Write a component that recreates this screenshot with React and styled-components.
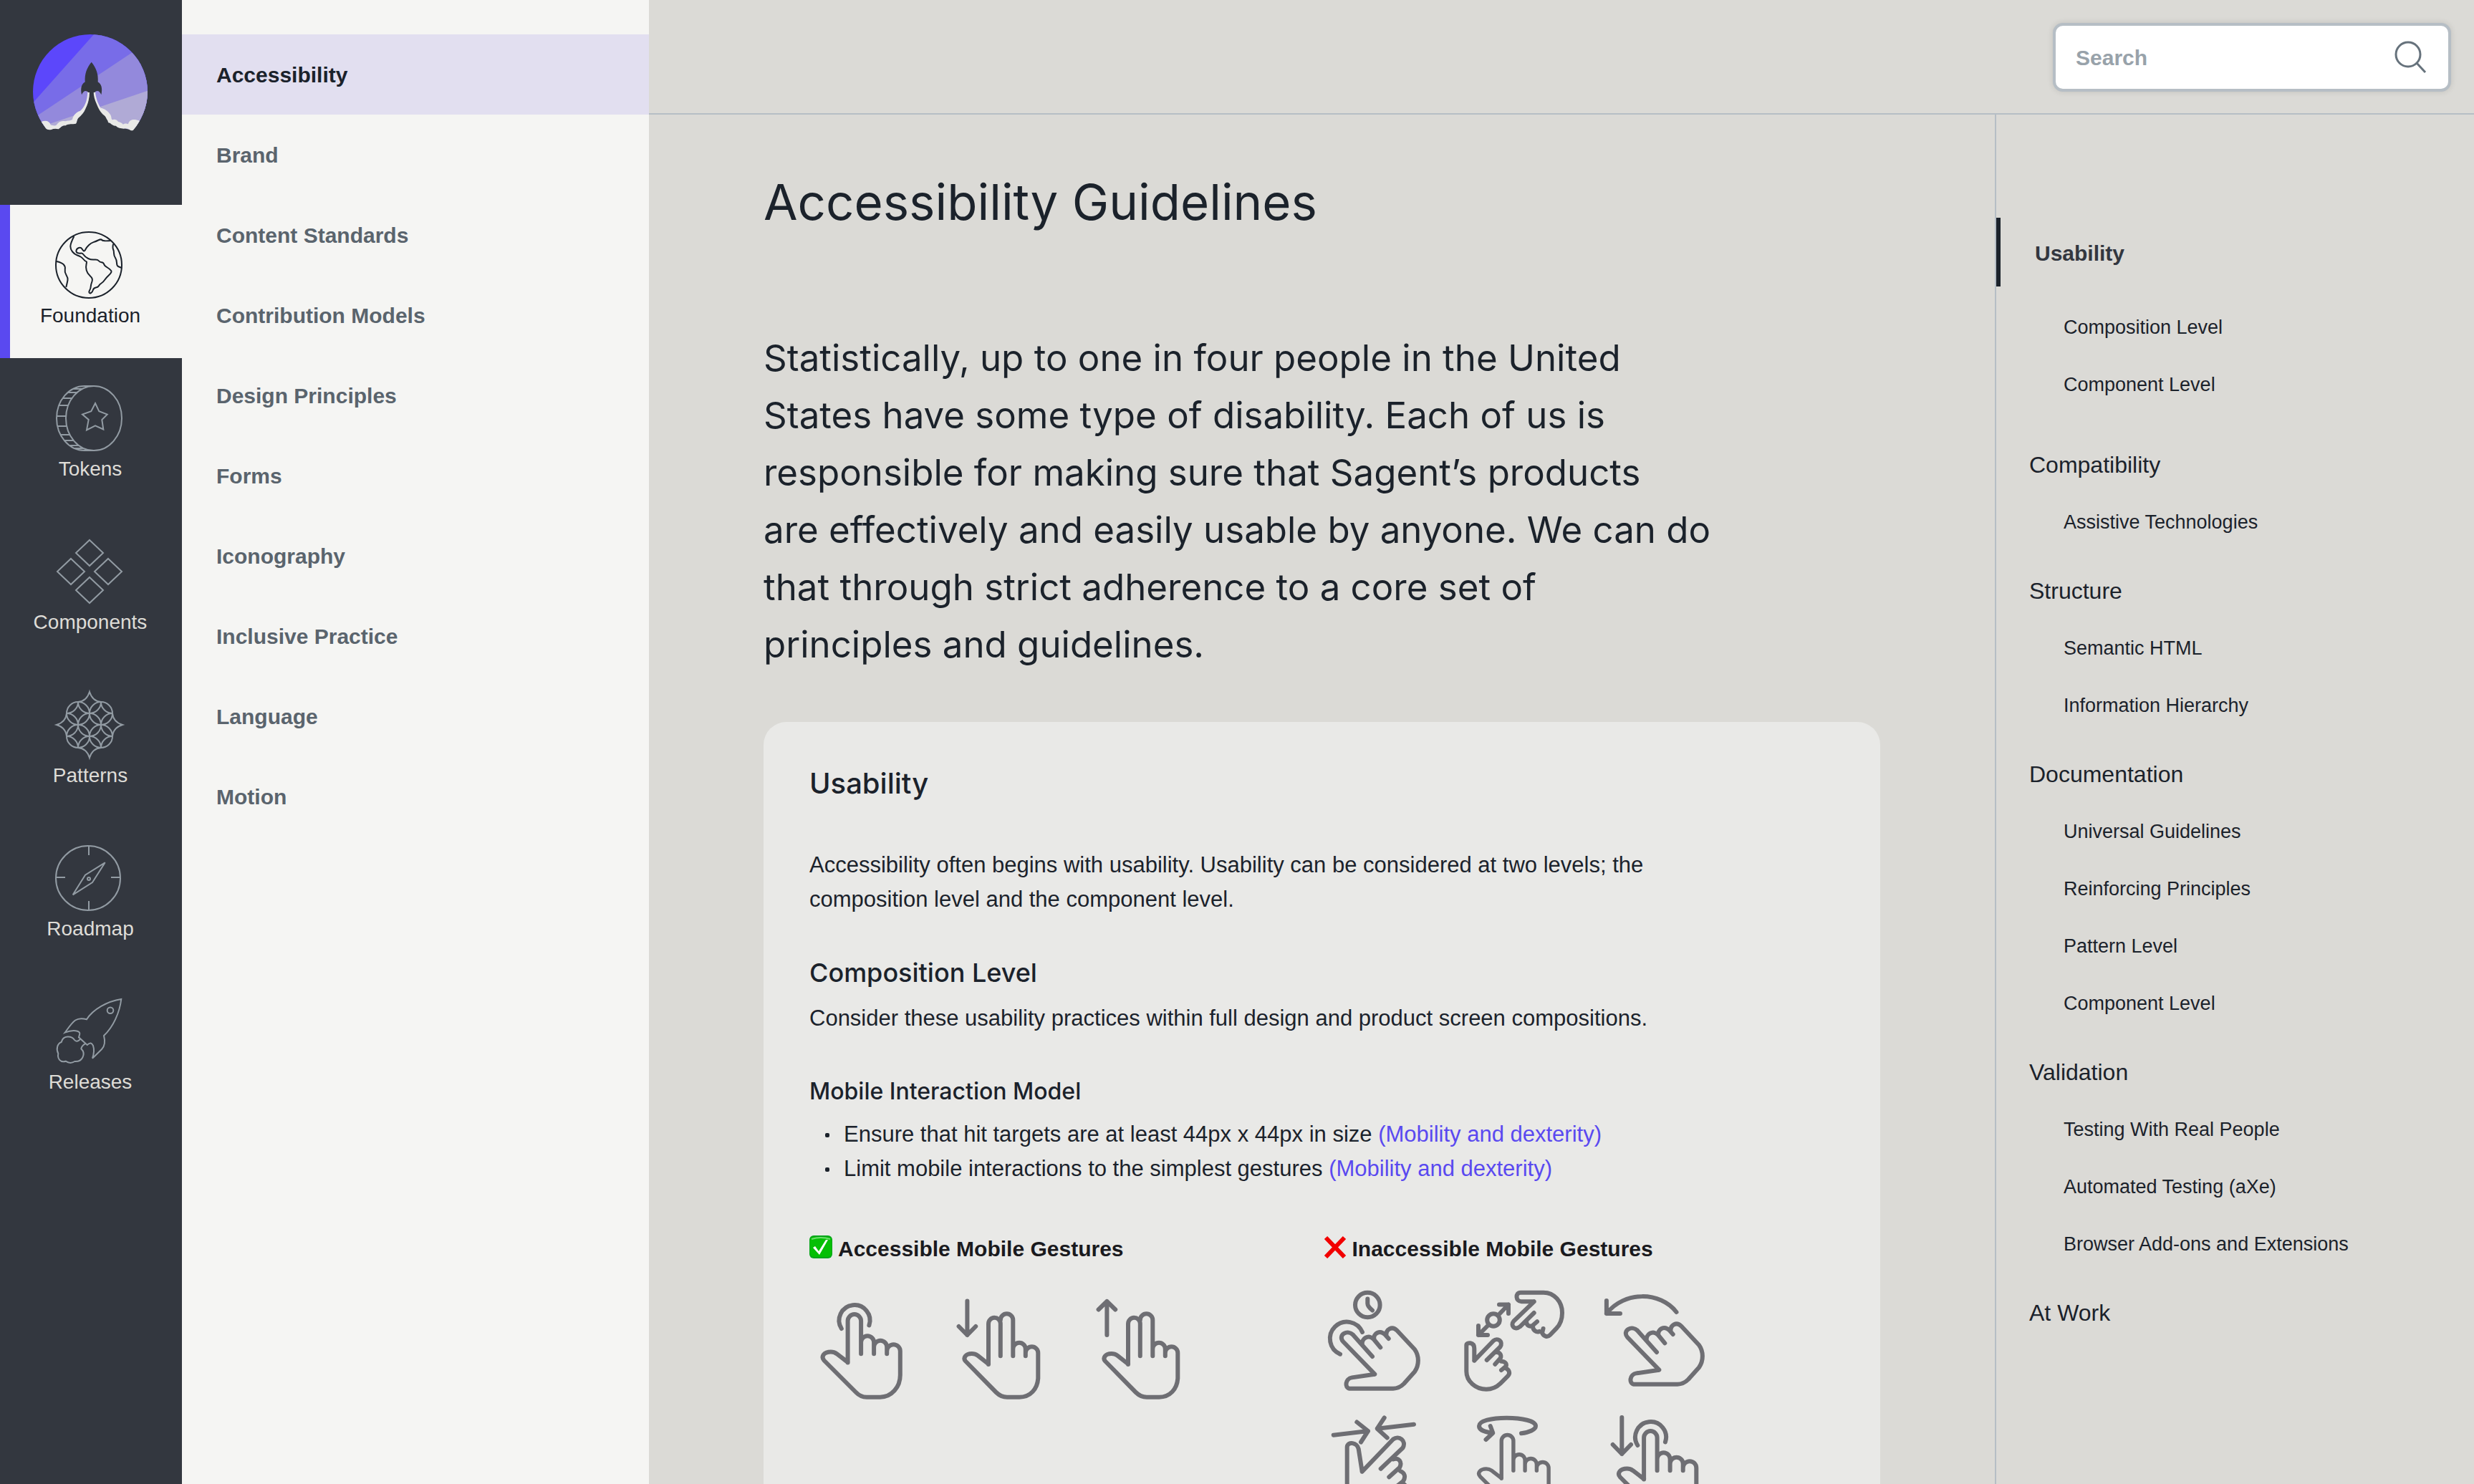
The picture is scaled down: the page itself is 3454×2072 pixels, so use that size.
import styled, { createGlobalStyle } from "styled-components";

const ink = "#1b222b";
const rail = "#33373f";
const paper = "#f5f5f3";
const stone = "#dbdad6";
const line = "#b6bec5";
const violet = "#5a49f0";

const sans = `"Liberation Sans", Arial, sans-serif`;
const display = `Inter, "Liberation Sans", sans-serif`;

// Runs a soft curve through a list of points
function smooth(points) {
  const last = points.length - 1;
  let d = `M${points[0]}`;
  for (let i = 1; i < last; i++) {
    const [x, y] = points[i];
    const [nx, ny] = points[i + 1];
    const end = i === last - 1 ? [nx, ny] : [(x + nx) / 2, (y + ny) / 2];
    d += `Q${x},${y} ${end}`;
  }
  return d;
}

/* ---------- logo and rail icons ---------- */

function Logo() {
  return (
    <svg width="160" height="136" viewBox="0 0 160 136" aria-hidden="true">
      <clipPath id="logo-disc">
        <circle cx="80" cy="80" r="80" />
      </clipPath>
      <g clipPath="url(#logo-disc)">
        <rect width="160" height="136" fill="#5c47fb" />
        <path d="M85 0H160V136H0V95.5z" fill="#786ce8" />
        <path d="M160 10.9V136H0V117.6z" fill="#9389dc" />
        <path d="M160 78.7V136H0V132.8z" fill="#b0aad6" />
      </g>
      <path
        fill={rail}
        d="M78 80H86L88 94 94 106 102 115 106 123 126 131 140 134V136H18V132L36 131 45 126 60 124 63 117 71 108 77 95z"
      />
      <path
        fill="#e9e9e7"
        d="M76.3 80.3C76 93 72 102 65.7 107C61 108 56 113 55 119C52 121 48 120 45 121.3C39 120 36 122 32.3 127C30 128 27 127 24.7 126.3C23 121 18 119.5 11.7 122L18 131.3Q20 134 25.7 133Q30 131 35.7 132.3C39 130 41 126 45 127.5C50 124 55 126 60 124.7C62 122 61 119 63 117C68 113 71 109 73 104.7C77 97 79 89 79 80.3z"
      />
      <path
        fill="#e9e9e7"
        d="M87 80.3C88 90 91 97 94.5 102.7C99 103 105 107 108 112C110 115 109 118 110.7 119.3C114 118 117 119 119 122C122 123 124 123 125.7 125.8C128 124 131 124 133 125.3C134 120 139 117 149 120.7Q145 128 140 133.7C138 135 136 134 134 132.5C131 131 129 131 127 131.7C122 131 119 131 115.7 127.7C113 128 110 126 107.3 123.5C104 124 105 120 104 120C102 117 102 115 99.3 113C95 110 91 103 89 97.5C86 91 84.7 86 84.7 80.3z"
      />
      <path
        fill={rail}
        d="M81.7 38.7C75 47 72 55 72.7 66.5C68 69 66 75 68 84.3C70 79 74 77 77.3 81H86.1C89.4 77 93.4 79 95.4 84.3C97.4 75 95.4 69 90.7 66.5C91.4 55 88.4 47 81.7 38.7z"
      />
    </svg>
  );
}

function GlobeIcon() {
  const americas = [
    [25.3, 8], [20.3, 18], [20.3, 26], [26, 33], [33, 35.5], [37, 38], [41, 43],
    [43.5, 43], [41.5, 51], [44, 60], [52, 67], [49, 75], [48.5, 81], [46, 85],
    [47, 88], [51, 86], [52.7, 80], [59, 79], [61, 75], [66, 72], [70, 66],
    [78.5, 58], [76, 54], [67.7, 49], [66.5, 44.5], [61, 44], [58.3, 40],
    [49.3, 41], [41, 37], [37, 31], [33, 32], [28, 30.5], [29, 25], [35, 23],
    [38, 28], [40, 29], [43, 23], [49, 17.3], [56, 15], [63, 11.5], [66, 15], [76.7, 14],
  ];
  const africa = [
    [80, 18.7], [79, 24], [81, 28], [81, 35], [85, 41], [85, 49], [89, 51], [92, 52],
  ];
  const pacific = [
    [1, 43], [8, 44.5], [13.5, 50], [12, 58], [17, 66], [16, 72], [14.3, 79],
  ];
  return (
    <>
      <circle cx="46" cy="48" r="46" />
      <path d={smooth(americas)} />
      <path d={smooth(africa)} />
      <path d={smooth(pacific)} />
    </>
  );
}

function CoinIcon() {
  const ribs = [7, 12, 20, 30, 45, 59, 71, 79, 86, 90];
  return (
    <>
      <ellipse cx="53" cy="48" rx="39" ry="45" />
      <path d="M53 3H40A39 45 0 0 0 40 93H53" />
      {ribs.map((y) => {
        const x = 40 - 39 * Math.sqrt(1 - ((y - 48) / 45) ** 2);
        return <path key={y} d={`M${x} ${y}h13`} />;
      })}
      <path d="M55 27L60.3 38.3 71.7 42.6 64.3 50 66.3 63.5 55 58.3 43 64.4 45.7 50 37 42.6 49.3 38.3z" />
    </>
  );
}

function DiamondsIcon() {
  const centers = [[47, 22], [21, 48], [73, 48], [47, 74]];
  return centers.map(([x, y]) => (
    <path key={`${x}-${y}`} d={`M${x} ${y - 18}l19 18-19 18-19-18z`} />
  ));
}

function PatternIcon() {
  return (
    <g transform="translate(47 48)">
      <circle r="16" />
      {[0, 90, 180, 270].map((turn) => (
        <g key={turn} transform={`rotate(${turn})`}>
          <circle cx="16" cy="-16" r="16" />
          <path d="M-16-32A16 16 0 0 0 16-32" />
          <path d="M-16-32Q-4-33 0-46Q4-33 16-32" />
          <path d="M16-32A16 16 0 0 0 32-16" />
        </g>
      ))}
    </g>
  );
}

function CompassIcon() {
  return (
    <>
      <circle cx="45" cy="48" r="45" />
      <path d="M46 3V16M46 80V93M0 47H13M77 47H90" />
      <path d="M68.7 26.3L51 54 23.7 71.3 41 43.7z" />
      <circle cx="46" cy="49" r="2" />
    </>
  );
}

function RocketIcon() {
  return (
    <>
      <path d="M91.3 3C72 6 52 17 43 31.3C28 27 24 34 12.7 49.7C24 45 34 47 33.3 51.5L32 56.3L43.7 67C48 63 50 64 52 68C54 74 53 80 51 85.7L64 73C69 68 69 62 67 54C80 42 89 22 91.3 3z" />
      <circle cx="76" cy="18.7" r="4.3" />
      <path d="M34.3 58.7Q29 64 26 60C22 54 10 53 7.7 63C2 65 0 73 3.3 79C2 86 6 92 13.7 89.7Q20 94 26.3 90C36 91 43 80 35.3 72.3Q36 68 41 65.3" />
    </>
  );
}

/* ---------- gesture icons ---------- */

function PointingHand() {
  return (
    <path d="M53.6 102.5V44.3a9.25 9.25 0 0 1 18.5 0V90.3M72.1 74.3a9 9 0 0 1 18 0V90.3M90.1 80.7a9 9 0 0 1 18.1 0V90.3M108.2 86.5a9.3 9.3 0 0 1 18.6 0V119.7c0 17-12 31-28 31H80c-6 0-11-2.5-15-6.7L20.5 99.5c-5-5.5 0-11.9 9.5-11.9c3 0 5.7.8 8.2 2.6L53.6 102" />
  );
}

function TapArc() {
  return <path d="M44.8 55A21.5 21.5 0 1 1 83.4 50.5" />;
}

function TwoFingerHand() {
  return (
    <path d="M55 105V48.5a8.4 8.4 0 0 1 16.8-.5V93.3M71.8 43a8.75 8.75 0 0 1 17.5 0V93.3M89.3 83.5a8.7 8.7 0 0 1 17.5 0V93.3M106.8 89a8.7 8.7 0 0 1 17.5 0V124.5c-1 15-11 26.2-26 26.2H81c-6 0-11-2.5-15.3-6.7L23 100.5c-4-4.5 0-10.5 8.8-10.5c3 0 5.7.8 8.2 2.6L55 104.5" />
  );
}

function SlantedHand() {
  return (
    <path d="M71.3 118.7L27 73c-4-5-2-9 1.5-11.2c4-2.4 9-1.3 12.3 1.7L68 94M54 78c-2-9 9-16 16-8L79.3 81.3M70.5 70c-2-8 8-14 15.3-6.5L90.7 69M87.500 65c-1-9 8-14 14.5-7.7L127 84c6.5 9 6.5 22 0 31.3L112 132c-5 5-10 6.7-15 6.7H36c-7-1-6-14 3.5-15.300L71.3 118.7" />
  );
}

const gestures = {
  tap: (
    <>
      <TapArc />
      <PointingHand />
    </>
  ),
  swipeDown: (
    <>
      <path d="M25.4 16.5V64M13.6 52L25.4 64 37.2 52" />
      <TwoFingerHand />
    </>
  ),
  swipeUp: (
    <>
      <path d="M25.4 64V17M13.6 28.5L25.4 17 37.2 28.5" />
      <TwoFingerHand />
    </>
  ),
  longPress: (
    <>
      <circle cx="61.3" cy="22" r="17.3" />
      <path d="M61.3 13.5V20Q61.3 24 68 29.5" />
      <path d="M23 90.7A23.5 23.5 0 1 1 54 60" />
      <SlantedHand />
    </>
  ),
  spread: (
    <>
      <circle cx="42" cy="43" r="8.8" />
      <path d="M49 36L63 21.5M50 21.5H63V34M35 50L21 64M21 51V64H34" />
      <path d="M98.7 17.3H81c-8 0-9-12.6-1-12.6H112c15 0 26 13 26 28.3c0 8-2.5 16-8 21.7L121 64c-4 4-9 1.5-11-3l1.5-6M98.7 17.3L70.3 44.7c-5 6 1 13.5 9 7.5L98.7 33M88 45c0 5 4 8.5 9 5.5L103 45.3M97 52c0 5 5 9 9 7" />
      <path d="M15.3 99.7V83c0-10-11-9-11-5V114.7c0 14 13 25 27.7 25c8 0 15-3.5 20-8.4L62 121.3c4-4 2-9-3-11M15.3 99.7L42 72c6-5 14 1 9.5 8.5L32.7 99M46.3 88c5 0 7 4 5.7 8L44.3 104.7M53 100.7c5 0 8 3 6.5 7L53 113" />
    </>
  ),
  swipeArc: (
    <>
      <path d="M4.9 34C30 2 80 3 102.5 32M4.9 16V34H24" />
      <g transform="translate(7 -6)">
        <SlantedHand />
      </g>
    </>
  ),
  pinch: (
    <>
      <path d="M13.7 29.7L62 24M46.3 11.5L62 24 52 39.5M126 14.7L74.7 20.7M84.7 5.5L74.7 20.7 88.7 33.5" />
      <path d="M53.7 80.7L48.7 49c-2-9-15-11-16-3V124c0 16 14 28 30 28c9 0 16-4 22-10L112 114c6-6 5-12 0-16M53.7 80.7L97 35.5c8-6 19 2 13.5 12L79.7 76.7M97 63.5c8-3 13 4 9 11.5L91.3 88.3M107 80c6 2 8 8 4 14L101 102" />
    </>
  ),
  rotate: (
    <>
      <path d="M81 27.3C92 26 101 22 101 17C101 10 82 5.7 60.5 5.7S22 10 22 17c0 5 7 8.5 18 9.5M37.7 17L41.3 26.7 31.5 36" />
      <g transform="translate(5 -2) scale(.9)">
        <PointingHand />
      </g>
    </>
  ),
  tapDrag: (
    <>
      <path d="M26.3 5V56M13.7 43L26.3 56 39 43" />
      <g transform="translate(3.5 -11)">
        <TapArc />
        <PointingHand />
      </g>
    </>
  ),
};

/* ---------- data ---------- */

const sections = [
  { label: "Foundation", icon: <GlobeIcon />, active: true },
  { label: "Tokens", icon: <CoinIcon /> },
  { label: "Components", icon: <DiamondsIcon /> },
  { label: "Patterns", icon: <PatternIcon /> },
  { label: "Roadmap", icon: <CompassIcon /> },
  { label: "Releases", icon: <RocketIcon /> },
];

const pages = [
  "Accessibility",
  "Brand",
  "Content Standards",
  "Contribution Models",
  "Design Principles",
  "Forms",
  "Iconography",
  "Inclusive Practice",
  "Language",
  "Motion",
];

const contents = [
  { title: "Usability", items: ["Composition Level", "Component Level"] },
  { title: "Compatibility", items: ["Assistive Technologies"] },
  { title: "Structure", items: ["Semantic HTML", "Information Hierarchy"] },
  {
    title: "Documentation",
    items: [
      "Universal Guidelines",
      "Reinforcing Principles",
      "Pattern Level",
      "Component Level",
    ],
  },
  {
    title: "Validation",
    items: [
      "Testing With Real People",
      "Automated Testing (aXe)",
      "Browser Add-ons and Extensions",
    ],
  },
  { title: "At Work", items: [] },
];

function GestureList({ names }) {
  return (
    <Gestures>
      {names.map((name) => (
        <GestureIcon key={name} viewBox="0 0 144 160" aria-hidden="true">
          {gestures[name]}
        </GestureIcon>
      ))}
    </Gestures>
  );
}

function App() {
  return (
    <Shell>
      <GlobalStyle />
      <Rail aria-label="Sections">
        <Home href="#home" aria-label="Home">
          <Logo />
        </Home>
        {sections.map(({ label, icon, active }) => (
          <RailLink key={label} href={`#${label}`} $active={active}>
            <RailIcon viewBox="0 0 96 96" aria-hidden="true">
              {icon}
            </RailIcon>
            {label}
          </RailLink>
        ))}
      </Rail>
      <SideNav aria-label="Foundation">
        {pages.map((page, i) => (
          <SideLink key={page} href={`#${page}`} $active={i === 0}>
            {page}
          </SideLink>
        ))}
      </SideNav>
      <Body>
        <Header>
          <SearchBox>
            <SearchInput type="search" placeholder="Search" aria-label="Search" />
            <SearchIcon viewBox="0 0 48 48" aria-hidden="true">
              <circle cx="20" cy="20" r="17" />
              <path d="M32 32L44 45" />
            </SearchIcon>
          </SearchBox>
        </Header>
        <Columns>
          <Article>
            <Title>Accessibility Guidelines</Title>
            <Lead>
              Statistically, up to one in four people in the United
              <br />
              States have some type of disability. Each of us is
              <br />
              responsible for making sure that Sagent’s products
              <br />
              are effectively and easily usable by anyone. We can do
              <br />
              that through strict adherence to a core set of
              <br />
              principles and guidelines.
            </Lead>
            <Card>
              <CardTitle>Usability</CardTitle>
              <Intro>
                Accessibility often begins with usability. Usability can be
                considered at two levels; the composition level and the component
                level.
              </Intro>
              <Subtitle>Composition Level</Subtitle>
              <Text>
                Consider these usability practices within full design and product
                screen compositions.
              </Text>
              <Topic>Mobile Interaction Model</Topic>
              <Rules>
                <Rule>
                  Ensure that hit targets are at least 44px x 44px in size{" "}
                  <RuleLink href="#mobility">(Mobility and dexterity)</RuleLink>
                </Rule>
                <Rule>
                  Limit mobile interactions to the simplest gestures{" "}
                  <RuleLink href="#mobility">(Mobility and dexterity)</RuleLink>
                </Rule>
              </Rules>
              <Comparison>
                <section>
                  <GestureTitle>
                    <Mark viewBox="0 0 32 32" aria-hidden="true">
                      <rect width="32" height="32" rx="6" fill="#07a51a" />
                      <rect x="1" y="2" width="30" height="28" rx="5" fill="#05bf05" />
                      <path d="M3 5Q16 1 29 5" stroke="#6fdd6f" strokeWidth="2" fill="none" />
                      <path d="M5 17L8 15 13 22 23 6H26L14 27z" fill="#fff" />
                    </Mark>
                    Accessible Mobile Gestures
                  </GestureTitle>
                  <GestureList names={["tap", "swipeDown", "swipeUp"]} />
                </section>
                <section>
                  <GestureTitle>
                    <Mark viewBox="0 0 32 32" aria-hidden="true">
                      <path d="M3 3L29 30M29 3L3 30" stroke="#f20000" strokeWidth="6" />
                    </Mark>
                    Inaccessible Mobile Gestures
                  </GestureTitle>
                  <GestureList
                    names={["longPress", "spread", "swipeArc", "pinch", "rotate", "tapDrag"]}
                  />
                </section>
              </Comparison>
            </Card>
          </Article>
          <Toc aria-label="On this page">
            {contents.map(({ title, items }, i) => (
              <TocGroup key={title} $current={i === 0}>
                <TocTitle href={`#${title}`} $current={i === 0}>
                  {title}
                </TocTitle>
                {items.map((item) => (
                  <TocLink key={item} href={`#${item}`}>
                    {item}
                  </TocLink>
                ))}
              </TocGroup>
            ))}
          </Toc>
        </Columns>
      </Body>
    </Shell>
  );
}

export default App;

const GlobalStyle = createGlobalStyle`
  *, *::before, *::after {
    box-sizing: border-box;
  }
  body {
    margin: 0;
    font-family: ${sans};
    color: ${ink};
    background: ${stone};
  }
  a {
    color: inherit;
    text-decoration: none;
  }
  h1, h2, h3, h4, p, ul {
    margin: 0;
    padding: 0;
  }
`;

const Shell = styled.div`
  display: grid;
  grid-template-columns: 254px 652px minmax(0, 1fr);
  height: 100vh;
  overflow: hidden;
`;

const Rail = styled.nav`
  display: flex;
  flex-direction: column;
  background: ${rail};
`;

const Home = styled.a`
  display: flex;
  justify-content: center;
  height: 286px;
  padding: 48px 2px 0 0;
`;

const RailLink = styled.a`
  display: flex;
  flex-direction: column;
  align-items: center;
  gap: 6px;
  height: 214px;
  padding: 36px 2px 0 0;
  font-size: 28px;
  line-height: 34px;
  color: ${({ $active }) => ($active ? ink : "#dedcd7")};
  background: ${({ $active }) => ($active ? paper : "transparent")};
  box-shadow: ${({ $active }) => ($active ? `inset 14px 0 ${violet}` : "none")};

  svg {
    stroke: ${({ $active }) => ($active ? ink : "#929ba3")};
  }
`;

const RailIcon = styled.svg`
  width: 96px;
  height: 96px;
  overflow: visible;
  fill: none;
  stroke-width: 2;
`;

const SideNav = styled.nav`
  display: flex;
  flex-direction: column;
  padding-top: 48px;
  background: ${paper};
`;

const SideLink = styled.a`
  display: flex;
  align-items: center;
  height: 112px;
  padding: 2px 48px 0;
  font-size: 30px;
  font-weight: 700;
  color: ${({ $active }) => ($active ? ink : "#5a646d")};
  background: ${({ $active }) => ($active ? "#e2dff0" : "transparent")};
`;

const Body = styled.div`
  display: flex;
  flex-direction: column;
  min-width: 0;
  min-height: 0;
`;

const Header = styled.header`
  display: flex;
  flex: none;
  align-items: center;
  justify-content: flex-end;
  height: 160px;
  padding: 2px 32px 0 0;
  border-bottom: 2px solid ${line};
`;

const SearchBox = styled.label`
  display: flex;
  align-items: center;
  width: 556px;
  height: 96px;
  padding: 0 28px;
  background: #fff;
  border: 4px solid ${line};
  border-radius: 14px;
  box-shadow: 0 0 8px rgba(0, 0, 0, 0.12);
`;

const SearchInput = styled.input`
  flex: 1;
  min-width: 0;
  padding: 2px 0 0;
  font: 700 30px ${sans};
  color: ${ink};
  background: none;
  border: 0;
  outline: 0;

  &::placeholder {
    color: #98a2aa;
    opacity: 1;
  }
`;

const SearchIcon = styled.svg`
  width: 48px;
  height: 48px;
  fill: none;
  stroke: #66727c;
  stroke-width: 3;
`;

const Columns = styled.div`
  display: grid;
  flex: 1;
  grid-template-columns: minmax(0, 1fr) 669px;
  min-height: 0;
`;

const Article = styled.main`
  padding: 78px 160px 0;
  overflow: auto;
  scrollbar-width: none;
`;

const Title = styled.h1`
  margin-bottom: 134px;
  font: 400 69px/88px ${display};
`;

const Lead = styled.p`
  margin-bottom: 68px;
  font: 400 51px/80px ${display};
`;

const Card = styled.article`
  padding: 64px;
  background: #e9e9e7;
  border-radius: 32px;
`;

const CardTitle = styled.h2`
  font: 500 40px/44px ${display};
`;

const Text = styled.p`
  max-width: 1200px;
  font-size: 31px;
  line-height: 48px;
`;

const Intro = styled(Text)`
  margin-top: 68px;
`;

const Subtitle = styled.h3`
  margin: 54px 0 16px;
  font: 500 36px/48px ${display};
`;

const Topic = styled.h4`
  margin: 54px 0 12px;
  font: 500 32px/48px ${display};
`;

const Rules = styled.ul`
  list-style: none;
`;

const Rule = styled.li`
  padding-left: 22px;
  font-size: 31px;
  line-height: 48px;

  &::before {
    content: "";
    display: inline-block;
    width: 6px;
    height: 6px;
    margin-right: 20px;
    vertical-align: 6px;
    background: ${ink};
    border-radius: 2px;
  }
`;

const RuleLink = styled.a`
  color: ${violet};
`;

const Comparison = styled.div`
  display: grid;
  grid-template-columns: 1fr 1fr;
  column-gap: 4px;
  margin-top: 64px;
`;

const GestureTitle = styled.h4`
  display: flex;
  align-items: center;
  gap: 8px;
  margin-bottom: 32px;
  font-size: 30px;
  line-height: 48px;
  color: #1a1a1e;
`;

const Mark = styled.svg`
  width: 32px;
  height: 32px;
  margin-bottom: 6px;
`;

const Gestures = styled.div`
  display: grid;
  grid-template-columns: repeat(3, 144px);
  gap: 14px 51px;
`;

const GestureIcon = styled.svg`
  width: 144px;
  height: 160px;
  fill: none;
  stroke: #6e6e73;
  stroke-width: 6;
  stroke-linecap: round;
  stroke-linejoin: round;
`;

const Toc = styled.nav`
  display: flex;
  flex-direction: column;
  gap: 16px;
  padding-top: 144px;
  border-left: 2px solid ${line};
`;

const TocGroup = styled.div`
  display: flex;
  flex-direction: column;
  margin-bottom: ${({ $current }) => ($current ? "16px" : "0")};
`;

const TocTitle = styled.a`
  display: flex;
  align-items: center;
  height: ${({ $current }) => ($current ? "96px" : "80px")};
  margin-bottom: ${({ $current }) => ($current ? "16px" : "0")};
  padding: ${({ $current }) => ($current ? "4px 0 0 54px" : "2px 0 0 46px")};
  font-size: ${({ $current }) => ($current ? "30px" : "32px")};
  font-weight: ${({ $current }) => ($current ? 700 : 400)};
  color: ${({ $current }) => ($current ? rail : ink)};
  box-shadow: ${({ $current }) => ($current ? `inset 6px 0 ${ink}` : "none")};
`;

const TocLink = styled.a`
  display: flex;
  align-items: center;
  height: 80px;
  padding: 2px 0 0 94px;
  font-size: 27px;
`;
